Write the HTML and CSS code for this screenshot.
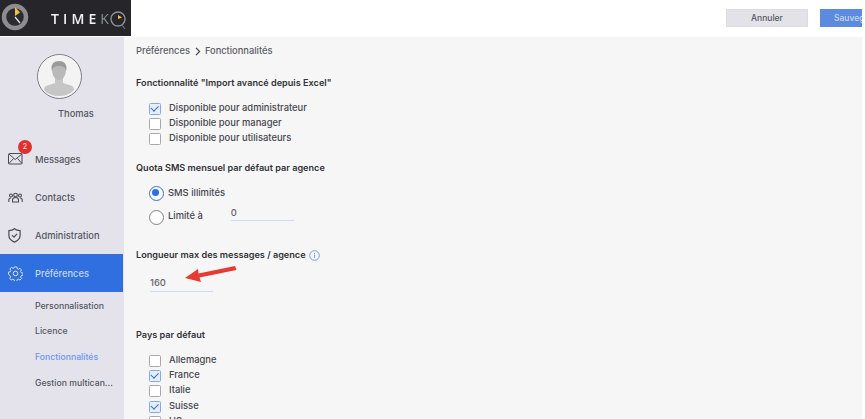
FILE: index.html
```html
<!DOCTYPE html>
<html lang="fr">
<head>
<meta charset="utf-8">
<title>Timeko - Fonctionnalités</title>
<link rel="stylesheet" href="styles.css">
</head>
<body>
<div class="app">
  <header class="topbar">
    <button class="btn btn-cancel">Annuler</button>
    <button class="btn btn-save">Sauvegarder</button>
  </header>
  <div class="logo">
    <svg class="logo-mark" width="32" height="32" viewBox="0 0 32 32">
      <circle cx="15" cy="15" r="11" fill="#2b2b30" stroke="#8d8d90" stroke-width="4.5"/>
      <path d="M15 5v9l5-3.5z" fill="#f2c23e"/>
      <path d="M15 15l5 6" stroke="#e8e8e8" stroke-width="1.2"/>
    </svg>
    <span class="logo-time">TIME</span><span class="logo-k">K</span>
    <svg class="logo-o" width="18" height="24" viewBox="0 0 18 24">
      <circle cx="8" cy="9" r="7" fill="none" stroke="#8b9294" stroke-width="1.4"/>
      <path d="M8 5v4l4-1.500z" fill="#f2c23e"/>
      <path d="M12 15l3 4" stroke="#6f7678" stroke-width="1.2"/>
    </svg>
  </div>
  <div class="layout">
    <aside class="sidebar">
      <div class="avatar">
        <svg width="42" height="42" viewBox="0 0 42 42">
          <circle cx="21" cy="21" r="21" fill="#f3f3f3"/>
          <path d="M17 23v5l-9 3c-1 .4-2 2-2 4 4 4 9 6 15 6s11-2 15-6c0-2-1-3.600-2-4l-9-3v-5z" fill="#c6c6c6"/>
          <path d="M21 7c-5 0-7 3-7 7 0 5 2 11 7 11s7-6 7-11c0-4-2-7-7-7z" fill="#b9b9b9"/>
          <path d="M21 6c-5 0-7.500 3-7.500 7 0 1 .2 2 .5 3 .5-3 2-5 7-5s6.500 2 7 5c.3-1 .5-2 .5-3 0-4-2.500-7-7.500-7z" fill="#9a9a9a"/>
        </svg>
      </div>
      <div class="user">Thomas</div>
      <nav class="nav">
        <a class="nav-item">
          <span class="nav-icon">
            <svg width="15" height="12" viewBox="0 0 15 12" fill="none" stroke="#4a4a55" stroke-width="1"><rect x=".5" y=".5" width="13.500" height="10.500" rx="1"/><path d="M1 1l6.200 5.500L14 1M1 10.500l4.500-5M14 10.500l-4.500-5"/></svg>
            <span class="badge">2</span>
          </span>
          Messages
        </a>
        <a class="nav-item">
          <span class="nav-icon">
            <svg width="15" height="11" viewBox="0 0 15 11" fill="none" stroke="#4a4a55" stroke-width="1.100"><circle cx="7.500" cy="3" r="1.800"/><circle cx="3" cy="3.500" r="1.500"/><circle cx="12" cy="3.500" r="1.500"/><path d="M4.500 10V8c0-1.500 1.200-2.500 3-2.500s3 1 3 2.500v2zM.8 10V8c0-1 .8-2 2.200-2M14.200 10V8c0-1-.8-2-2.200-2"/></svg>
          </span>
          Contacts
        </a>
        <a class="nav-item">
          <span class="nav-icon">
            <svg width="13" height="15" viewBox="0 0 13 15" fill="none" stroke="#4a4a55" stroke-width="1.200"><path d="M6.500.8c1.500 1.300 3.500 1.800 5.600 1.800v5c0 3-2.300 5.200-5.600 6.500C3.200 12.800.9 10.600.9 7.600v-5C3 2.600 5 2.100 6.500.8z"/><path d="M4 7.200l2 2 3-3.400"/></svg>
          </span>
          Administration
        </a>
        <a class="nav-item nav-active">
          <span class="nav-icon">
            <svg width="15" height="15" viewBox="0 0 15 15" fill="none" stroke="#dbe6fa" stroke-width="1"><circle cx="7.500" cy="7.500" r="2.300"/><path d="M6.300.8h2.400l.4 1.900 1.300.6 1.700-1 1.600 1.700-1 1.600.6 1.300 1.900.4v2.400l-1.900.4-.6 1.300 1 1.600-1.600 1.700-1.700-1-1.300.6-.4 1.900H6.300l-.4-1.900-1.300-.6-1.700 1-1.600-1.700 1-1.600-.6-1.300L0 8.700V6.300l1.900-.4.600-1.300-1-1.600 1.600-1.700 1.700 1 1.300-.6z" transform="translate(.5 .1) scale(.95)"/></svg>
          </span>
          Préférences
        </a>
      </nav>
      <ul class="subnav">
        <li>Personnalisation</li>
        <li>Licence</li>
        <li class="sub-active">Fonctionnalités</li>
        <li>Gestion multican...</li>
      </ul>
    </aside>
    <main class="main">
      <div class="crumbs"><span>Préférences</span>
        <svg class="crumb-sep" width="6" height="9" viewBox="0 0 6 9" fill="none" stroke="#444" stroke-width="1.200"><path d="M1 .8l3.600 3.700L1 8.200"/></svg>
        <span>Fonctionnalités</span></div>

      <h2 class="title title-import">Fonctionnalité "Import avancé depuis Excel"</h2>
      <div class="checks">
        <div class="check on">Disponible pour administrateur</div>
        <div class="check">Disponible pour manager</div>
        <div class="check">Disponible pour utilisateurs</div>
      </div>

      <h2 class="title title-quota">Quota SMS mensuel par défaut par agence</h2>
      <div class="radio on">SMS illimités</div>
      <div class="radio radio-limit">Limité à <span class="field field-limit">0</span></div>

      <h2 class="title title-max">Longueur max des messages / agence
        <svg class="info" width="11" height="11" viewBox="0 0 11 11" fill="none" stroke="#6f9fe6" stroke-width="1"><circle cx="5.500" cy="5.500" r="4.800"/><path d="M5.500 4.800v3M5.500 3v.9"/></svg>
      </h2>
      <div class="max-row">
        <span class="field field-max">160</span>
        <svg class="arrow" width="54" height="22" viewBox="0 0 54 22"><path d="M51 1L14.500 8.500 14 4 1 13l16 4-1.500-4.500L52.500 5z" fill="#e83a33"/></svg>
      </div>

      <h2 class="title title-country">Pays par défaut</h2>
      <div class="checks">
        <div class="check">Allemagne</div>
        <div class="check on">France</div>
        <div class="check">Italie</div>
        <div class="check on">Suisse</div>
        <div class="check">US</div>
      </div>
    </main>
  </div>
</div>
</body>
</html>
```
FILE: styles.css
```css
* { box-sizing: border-box; }
html, body { margin: 0; height: 100%; background: #fff; overflow: hidden; }
body { font-family: Inter, "Open Sans", sans-serif; color: #3d3d45; }

.app {
  position: relative;
  width: 862px;
  height: 419px;
  display: flex;
  flex-direction: column;
  overflow: hidden;
  filter: blur(0.4px);
}

.topbar {
  height: 37px;
  flex: none;
  display: flex;
  justify-content: flex-end;
  align-items: flex-start;
  gap: 12px;
  padding-top: 9px;
  background: #fff;
}
.btn {
  height: 18px;
  border: 0;
  padding: 0;
  font: 500 8.500px Inter, sans-serif;
  overflow: hidden;
  white-space: nowrap;
}
.btn-cancel { width: 82px; background: #e2e2e8; color: #55555f; border: 1px solid #dcdce2; }
.btn-save { width: 42px; background: #5b8ade; color: #c8d8f6; text-align: left; padding-left: 14px; }

.logo {
  position: absolute;
  left: 0;
  top: 0;
  width: 131px;
  height: 36px;
  background: #25252a;
  display: flex;
  align-items: center;
  color: #f1f1f1;
}
.logo-mark { flex: none; }
.logo-time { margin-left: 19px; font: 600 14px "Open Sans", sans-serif; letter-spacing: 4.100px; }
.logo-k { font: 400 14px "Open Sans", sans-serif; color: #8b9294; }
.logo-o { flex: none; margin: 7px 0 0 1px; }

.layout { flex: 1; display: flex; min-height: 0; }

.sidebar {
  width: 124px;
  flex: none;
  background: #e4e3ec;
  color: #55555f;
  font-size: 9.300px;
  font-weight: 500;
}
.avatar {
  width: 45px;
  height: 45px;
  margin: 17px 0 0 37px;
  border: 1.500px solid #7a7a88;
  border-radius: 50%;
  overflow: hidden;
  background: #f3f3f3;
}
.avatar svg { display: block; }
.user { margin: 8px 0 0 58px; line-height: 14px; }
.nav { margin-top: 19px; }
.nav-item {
  height: 38px;
  display: flex;
  align-items: center;
  padding-left: 8px;
}
.nav-icon { position: relative; width: 27px; display: flex; align-items: center; }
.badge {
  position: absolute;
  left: 10px;
  top: -13px;
  width: 14px;
  height: 14px;
  border-radius: 50%;
  background: #e0312e;
  color: #f6d5d5;
  font-size: 7px;
  line-height: 14px;
  text-align: center;
}
.nav-active { background: #2f6fdf; color: #c6d8f8; margin-right: 1px; }
.subnav { list-style: none; margin: 0; padding: 0; padding-top: 1.500px; }
.subnav li { height: 25.700px; line-height: 25.700px; padding-left: 35px; font-size: 8.700px; white-space: nowrap; }
.sub-active { color: #6f95ea; }

.main {
  flex: 1;
  min-width: 0;
  background: #f6f6f6;
  padding: 7px 0 0 12px;
  font-size: 9.400px;
  font-weight: 500;
  color: #45454d;
}
.crumbs { display: flex; align-items: center; line-height: 14px; color: #5d5d66; font-size: 9.300px; }
.crumb-sep { margin: 0 4px 0 5px; }
.title { margin: 0; font-size: 9.150px; font-weight: 600; line-height: 14px; color: #333338; }
.title-import { margin-top: 18px; }
.title-quota { margin-top: 16px; }
.title-max { margin-top: 21px; display: flex; align-items: center; gap: 3px; }
.title-country { margin-top: 36px; }
.checks { margin-top: 9.500px; }
.check {
  position: relative;
  height: 15.300px;
  line-height: 15.300px;
  padding-left: 33px;
  white-space: nowrap;
}
.check::before {
  content: "";
  position: absolute;
  left: 13px;
  top: 3px;
  width: 10px;
  height: 10px;
  border: 1px solid #a8a8ad;
  border-radius: 1.500px;
  background: #fff;
}
.check.on::before { border-color: #85a8ec; background: #e6eefc; }
.check.on::after {
  content: "";
  position: absolute;
  left: 15px;
  top: 5px;
  width: 6px;
  height: 3.500px;
  border-left: 1.200px solid #2f6fdf;
  border-bottom: 1.200px solid #2f6fdf;
  transform: rotate(-45deg);
}
.radio {
  position: relative;
  height: 24px;
  line-height: 25px;
  padding-left: 32px;
  white-space: nowrap;
}
.title-quota + .radio { margin-top: 5px; }
.radio::before {
  content: "";
  position: absolute;
  left: 13px;
  top: 6px;
  width: 13px;
  height: 13px;
  border: 1.200px solid #808085;
  border-radius: 50%;
  background: #fff;
}
.radio.on::before { border-color: #2f6fdf; }
.radio.on::after {
  content: "";
  position: absolute;
  left: 16px;
  top: 9px;
  width: 7px;
  height: 7px;
  border-radius: 50%;
  background: #2f6fdf;
}
.radio-limit { display: flex; align-items: center; height: 23px; }
.field {
  display: block;
  border-bottom: 1px solid #ccdaf4;
  color: #66666e;
}
.field-limit { width: 63px; height: 15px; line-height: 13px; margin: -4px 0 0 28px; }
.max-row { position: relative; margin: 12px 0 0 14px; }
.field-max { width: 63px; height: 18px; line-height: 17px; }
.arrow { position: absolute; left: 34px; top: -9px; }
```
